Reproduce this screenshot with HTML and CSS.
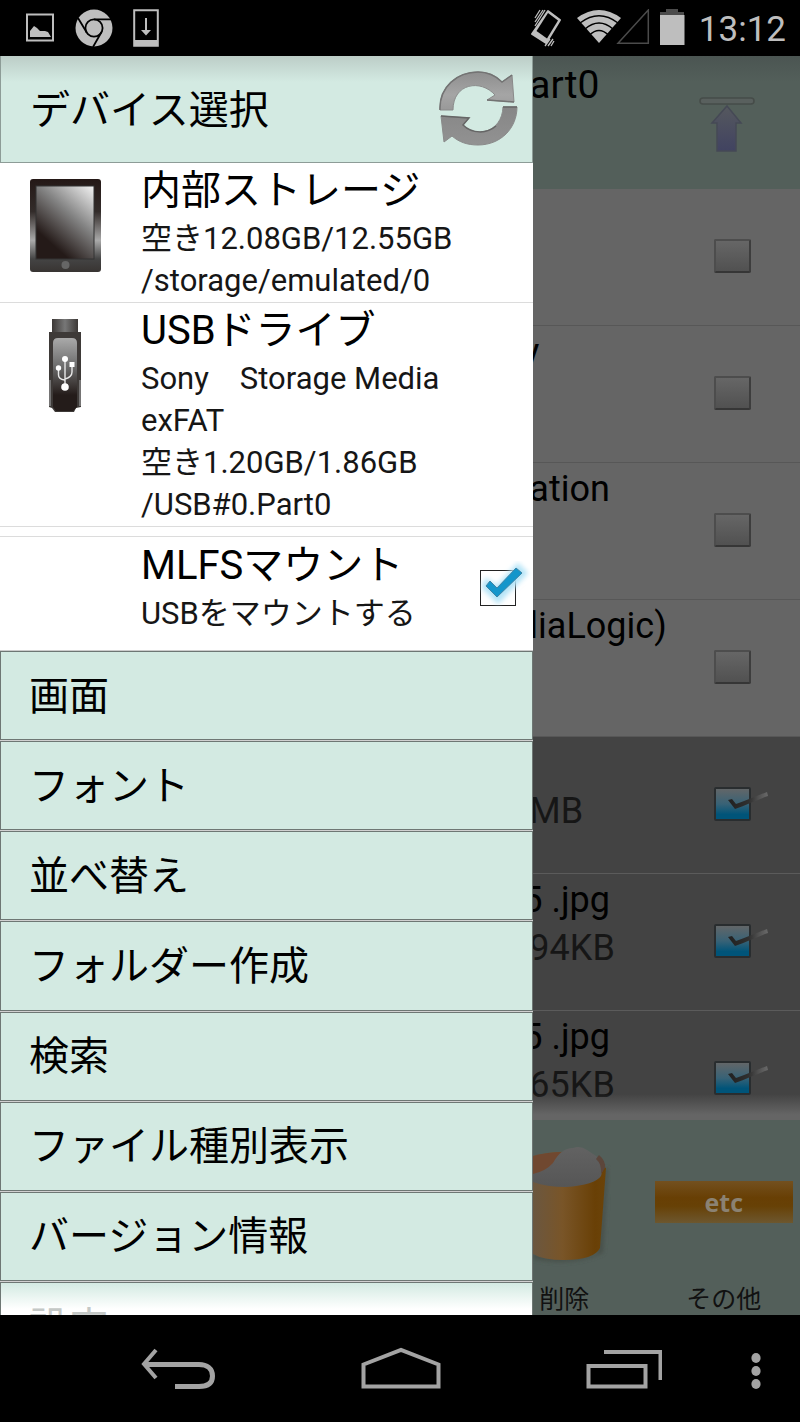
FILE: index.html
```html
<!DOCTYPE html>
<html lang="ja">
<head>
<meta charset="utf-8">
<meta name="viewport" content="width=device-width, initial-scale=1">
<title>デバイス選択</title>
<link rel="stylesheet" href="styles.css">
</head>
<body>
<header class="status">
  <div class="status-left">
    <svg width="30" height="38" viewBox="0 0 30 38"><path d="M2 5.500h26v26H2z" fill="none" stroke="#bebebe" stroke-width="2"/><path d="M5 28v-6l4-5 3 2 3 3h5l3 1 3 5z" fill="#bebebe"/></svg>
    <svg width="38" height="38" viewBox="0 0 38 38"><circle cx="19" cy="19" r="18.500" fill="#bebebe"/><g fill="none" stroke="#000" stroke-width="1.800"><circle cx="19" cy="19" r="8.600"/><path d="M19 10.400h17M11.600 23.300L3 9M26.400 23.300L18 38"/></g></svg>
    <svg width="26" height="38" viewBox="0 0 26 38"><path d="M1.200 1.200h23.600v35.600H1.200z" fill="#000" stroke="#bebebe" stroke-width="2"/><path d="M1 31h24v6H1zM12 9h2v12h4l-5 5.500-5-5.500h4z" fill="#bebebe"/></svg>
  </div>
  <div class="status-right">
    <svg width="32" height="38" viewBox="0 0 32 38"><path d="M18 2L30 11 16 34 2 25z" fill="#bebebe" stroke="#bebebe" stroke-width="2" stroke-linejoin="round"/><path d="M18 4L28 11.500 17 29.500 6.500 22z" fill="#000"/><path d="M5 9L10 1M5 13L13 1M5 17L15 1M15 37L20 30M18 37L23 30M21 37L24 32" stroke="#bebebe" stroke-width="1.300"/></svg>
    <svg class="wifi" width="76" height="38" viewBox="0 0 76 38"><path d="M0 9Q22 -7 44 9L22 34z" fill="#bebebe"/><g fill="none" stroke="#000" stroke-width="1.500"><path d="M3 14Q22-.5 41 14M8 20Q22 8 36 20M12.500 26Q22 17 31.500 26"/></g><path d="M41 34.300L71.300 1v33.300z" fill="none" stroke="#4b4b4b" stroke-width="1.500"/></svg>
    <svg width="25" height="38" viewBox="0 0 25 38"><path d="M6 0h12v3h6v4H0V3h6z" fill="#4b4b4b"/><path d="M0 6h24.500v30H0z" fill="#bebebe"/></svg>
    <time class="clock">13:12</time>
  </div>
</header>

<main class="screen">
  <aside class="drawer">
    <div class="drawer-head">
      <h1 class="title">デバイス選択</h1>
      <button class="refresh" aria-label="更新">
        <svg width="84" height="80" viewBox="0 0 84 80">
          <defs><linearGradient id="arrow" x1="0" y1="0" x2="0" y2="1"><stop offset="0" stop-color="#8e8e8e"/><stop offset=".6" stop-color="#a5a5a5"/><stop offset="1" stop-color="#999"/></linearGradient>
          <linearGradient id="arrow2" x1="0" y1="0" x2="0" y2="1"><stop offset="0" stop-color="#868686"/><stop offset="1" stop-color="#929292"/></linearGradient></defs>
          <path d="M2 41C1 18 19 3 40 3c11 0 18 4 24 10l10-7 2 27-27-2 8-5C43 10 15 14 15 41z" fill="url(#arrow)" stroke="#8a8a8a" stroke-width="1"/>
          <path d="M2 41C1 18 19 3 40 3c11 0 18 4 24 10l10-7M49 31l27 2" fill="none" stroke="#737373" stroke-width="1.500"/>
          <path d="M79 38c0 21-16 38-39 38-11 0-19-3-26-9l-8 6-3-26 28 2-6 7c12 13 39 8 40-18z" fill="url(#arrow2)" stroke="#8a8a8a" stroke-width="1"/>
          <path d="M65 38h14M3 47l28 2-6 7c9 9 24 9 33 1" fill="none" stroke="#666" stroke-width="1.500"/>
        </svg>
      </button>
    </div>

    <a class="device" href="#internal">
      <svg class="device-icon" width="74" height="96" viewBox="0 0 74 96">
        <defs><linearGradient id="case" x1="0" y1="0" x2="0" y2="1"><stop offset="0" stop-color="#241816"/><stop offset=".35" stop-color="#332c2a"/><stop offset=".66" stop-color="#aaa"/><stop offset=".86" stop-color="#444"/><stop offset="1" stop-color="#383432"/></linearGradient><linearGradient id="glass" x1=".95" y1="0" x2=".35" y2=".85"><stop offset="0" stop-color="#eee"/><stop offset=".5" stop-color="#828282"/><stop offset="1" stop-color="#241a18"/></linearGradient></defs>
        <rect x="1" y="1" width="71" height="93" rx="3" fill="url(#case)"/><rect x="7" y="8" width="58" height="73" fill="url(#glass)" stroke="#333" stroke-width="1"/><circle cx="36.500" cy="87" r="4" fill="#666"/>
      </svg>
      <span class="device-text"><strong class="name">内部ストレージ</strong><span class="line">空き12.08GB/12.55GB</span><span class="line">/storage/emulated/0</span></span>
    </a>
    <a class="device" href="#usb">
      <svg class="device-icon" width="74" height="96" viewBox="0 0 74 96">
        <defs><linearGradient id="stick" x1="0" y1="0" x2="0" y2="1"><stop offset="0" stop-color="#aaa"/><stop offset=".5" stop-color="#6c6c6c"/><stop offset="1" stop-color="#241c1a"/></linearGradient><linearGradient id="cap"><stop offset="0" stop-color="#3c3836"/><stop offset=".5" stop-color="#777"/><stop offset="1" stop-color="#3c3836"/></linearGradient></defs>
        <path d="M23 1h26v15H23z" fill="url(#cap)"/><path d="M20 14h32v75l-5 1-2 4H26l-3-4-3-1z" fill="#3e3a38"/><path d="M24 25q0-5 5-5h14q5 0 5 5v52H24z" fill="url(#stick)"/><path d="M24 77h24v12l-4 4H27l-3-4z" fill="#241c1a"/><path d="M21 62v26M51 62v26" stroke="#888" stroke-width="1.500"/>
        <g stroke="#e8e8e8" fill="none" stroke-width="1.400"><path d="M36 42v27M29.500 50v7q0 4 6 5M43 47v7q0 5-7 7"/></g><g fill="#fff"><circle cx="36" cy="41" r="3"/><circle cx="36" cy="69" r="3.800"/><circle cx="29.500" cy="50" r="2.700"/><path d="M40.500 44h5v5h-5z"/></g>
      </svg>
      <span class="device-text"><strong class="name">USBドライブ</strong><span class="line">Sony　Storage Media</span><span class="line">exFAT</span><span class="line">空き1.20GB/1.86GB</span><span class="line">/USB#0.Part0</span></span>
    </a>
    <label class="device mount" for="mount">
      <span class="device-text"><strong class="name">MLFSマウント</strong><span class="line">USBをマウントする</span></span>
      <span class="check mount-check"><input class="mount-input" type="checkbox" id="mount" checked>
        <svg class="mark" width="54" height="48" viewBox="0 0 54 48"><defs><filter id="glow" x="-30%" y="-30%" width="160%" height="160%"><feGaussianBlur stdDeviation="2.500"/></filter></defs><path d="M7 21l10 7L38 6l6 6-26 27L5 26z" fill="#b5e4f7" stroke="#b5e4f7" stroke-width="6" filter="url(#glow)"/><path d="M10 20l7 7L36 7l6 5-25 24L6 25z" fill="#1496cb" stroke="#3d83a5" stroke-width="1"/></svg>
      </span>
    </label>

    <nav class="menu">
      <button class="item">画面</button>
      <button class="item">フォント</button>
      <button class="item">並べ替え</button>
      <button class="item">フォルダー作成</button>
      <button class="item">検索</button>
      <button class="item">ファイル種別表示</button>
      <button class="item">バージョン情報</button>
      <button class="item last">設定</button>
    </nav>
  </aside>

  <section class="files">
    <div class="path">
      <span class="file-name folder">art0</span>
      <button class="up" aria-label="上へ"><svg width="58" height="58" viewBox="0 0 58 58"><defs><linearGradient id="up" x1="0" y1="0" x2="0" y2="1"><stop offset="0" stop-color="#55585e"/><stop offset="1" stop-color="#414361"/></linearGradient></defs><rect x="2" y="2" width="54" height="6" rx="3" fill="#59605e" stroke="#464c49" stroke-width="1.500"/><path d="M29 10l14 17h-5v28H19V27h-5z" fill="url(#up)" stroke="#454955" stroke-width="1.500"/></svg></button>
    </div>
    <div class="list">
      <div class="row"><span class="file-text"></span><span class="check"><input class="box" type="checkbox" aria-label="フォルダー1"></span></div>
      <div class="row"><span class="file-text"><span class="file-name tail">y</span></span><span class="check"><input class="box" type="checkbox" aria-label="フォルダー2"></span></div>
      <div class="row"><span class="file-text"><span class="file-name">ation</span></span><span class="check"><input class="box" type="checkbox" aria-label="フォルダー3"></span></div>
      <div class="row"><span class="file-text"><span class="file-name">liaLogic)</span></span><span class="check"><input class="box" type="checkbox" aria-label="フォルダー4"></span></div>
      <div class="row picked"><span class="file-text"><span class="file-name">&nbsp;</span><span class="size">MB</span></span><span class="check"><input class="box" type="checkbox" aria-label="ファイル1" checked><svg class="tick" width="44" height="24" viewBox="0 0 44 24"><use href="#pen"/></svg></span></div>
      <div class="row picked"><span class="file-text"><span class="file-name tail">5 .jpg</span><span class="size">94KB</span></span><span class="check"><input class="box" type="checkbox" aria-label="ファイル2" checked><svg class="tick" width="44" height="24" viewBox="0 0 44 24"><use href="#pen"/></svg></span></div>
      <div class="row picked"><span class="file-text"><span class="file-name tail">5 .jpg</span><span class="size">65KB</span></span><span class="check"><input class="box" type="checkbox" aria-label="ファイル3" checked><svg class="tick" width="44" height="24" viewBox="0 0 44 24"><defs><linearGradient id="ink" gradientUnits="userSpaceOnUse" x1="4" y1="0" x2="42" y2="0"><stop offset="0" stop-color="#222"/><stop offset=".5" stop-color="#303030"/><stop offset=".75" stop-color="#505050"/><stop offset="1" stop-color="#6a6a6a"/></linearGradient><path id="pen" d="M2 9l4-1 4 5C20 10 30 5 41 1l1 4C30 9 21 14 9 18z" fill="url(#ink)"/></defs><use href="#pen"/></svg></span></div>
    </div>
    <div class="tools">
      <button class="tool">
        <svg class="bucket" width="78" height="130" viewBox="0 0 78 130"><defs><filter id="soft"><feGaussianBlur stdDeviation="2"/></filter><linearGradient id="pail"><stop offset="0" stop-color="#6b5740"/><stop offset=".4" stop-color="#795528"/><stop offset=".85" stop-color="#694006"/><stop offset="1" stop-color="#6b4309"/></linearGradient><linearGradient id="paper" x1="0" y1="0" x2="0" y2="1"><stop offset="0" stop-color="#626262"/><stop offset="1" stop-color="#565656"/></linearGradient></defs><path d="M0 115q35 9 64 0l8-85 3 1-5 84q-32 14-70 6z" fill="#465049" filter="url(#soft)"/><path d="M0 18q20-5 38-4l35 16-6 80q-6 12-36 12-21 0-31-6z" fill="url(#pail)"/><path d="M0 18q15-4 31-4l-5 15-26 9z" fill="#704830"/><path d="M0 36q13-3 20-11 8-15 20-15 7-3 14 2l12 8q6 8 2 18-6 9-35 11-20 0-33-5z" fill="url(#paper)"/><path d="M66 17q7 6 6 13l-4 6q1-10-5-15z" fill="#5c463b"/></svg>
        <span class="tool-label">削除</span>
      </button>
      <button class="tool">
        <span class="etc">etc</span>
        <span class="tool-label">その他</span>
      </button>
    </div>
  </section>
</main>

<footer class="nav">
  <button class="nav-btn" aria-label="戻る"><svg width="76" height="50" viewBox="0 0 76 50"><path d="M16 6L4 20l12 14" fill="none" stroke="#a3a3a3" stroke-width="4"/><path d="M5 20.500h54c8 0 13.500 4 13.500 11.500S67 42.500 59 42.500H35" fill="none" stroke="#a3a3a3" stroke-width="5"/></svg></button>
  <button class="nav-btn" aria-label="ホーム"><svg width="80" height="50" viewBox="0 0 80 50"><path d="M2.500 42.500v-22L40 6l37.500 14.500v22z" fill="none" stroke="#a3a3a3" stroke-width="4"/></svg></button>
  <button class="nav-btn" aria-label="最近使ったアプリ"><svg width="76" height="50" viewBox="0 0 76 50"><path d="M2.500 22h57v20.500h-57zM18 8h56.500v28" fill="none" stroke="#a3a3a3" stroke-width="4"/></svg></button>
  <button class="more" aria-label="メニュー"><svg width="12" height="40" viewBox="0 0 12 40"><g fill="#a3a3a3"><ellipse cx="6" cy="7" rx="4.600" ry="5"/><ellipse cx="6" cy="20" rx="4.600" ry="5"/><ellipse cx="6" cy="33" rx="4.600" ry="5"/></g></svg></button>
</footer>
</body>
</html>
```
FILE: styles.css
```css
* { box-sizing: border-box; }
body {
  margin: 0;
  min-height: 100vh;
  display: flex;
  flex-direction: column;
  background: #000;
  color: #000;
  font-family: Roboto, "Noto Sans CJK JP", sans-serif;
}
button {
  border: 0;
  padding: 0;
  background: none;
  color: inherit;
  font: inherit;
}
a { color: inherit; text-decoration: none; }
svg { display: block; flex: none; }

.status {
  display: flex;
  justify-content: space-between;
  align-items: center;
  height: 56px;
  padding: 0 14px 0 25px;
}
.status-left { display: flex; gap: 20px; }
.status-right { display: flex; align-items: center; }
.wifi { margin: 0 7px 0 15px; }
.clock {
  margin: 4px 0 0 14px;
  color: #bebebe;
  font-size: 35px;
  line-height: 40px;
}

.screen {
  flex: 1;
  display: grid;
  grid-template-columns: 2fr 1fr;
}
.drawer {
  display: flex;
  flex-direction: column;
  min-width: 0;
  background: #fff;
}
.drawer-head {
  display: flex;
  justify-content: space-between;
  align-items: center;
  height: 107px;
  padding: 0 10px 0 29px;
  border: 1px solid #8d9c97;
  border-width: 0 1px 1px;
  background: linear-gradient(#bccdc7, #d3eae2 26px);
}
.title { margin: 0; padding-top: 4px; font-size: 40px; line-height: 54px; font-weight: 400; }
.device {
  display: flex;
  align-items: flex-start;
  padding: 1px 0 0 29px;
  border-bottom: 1px solid #dcdcdc;
}
.device-icon { margin: 14px 38px 0 0; }
.device-text { display: flex; flex: 1; flex-direction: column; }
.name { font-size: 40px; line-height: 54px; font-weight: 400; }
.line { font-size: 31px; line-height: 42px; color: #161616; }
.mount {
  margin-top: 9px;
  padding: 2px 10px 15px 141px;
  border-top: 1px solid #dcdcdc;
  border-bottom: 0;
}
.check { position: relative; flex: none; display: block; }
.mount-check { width: 43px; margin-top: 31px; }
.mount-input {
  display: block;
  appearance: none;
  width: 36px;
  height: 36px;
  margin: 0;
  border: 1px solid #222;
  background: #fff;
}
.mark { position: absolute; left: 0; top: -9px; }

.menu {
  flex: 1;
  display: grid;
  grid-template-rows: repeat(7, 1fr) 33px;
  gap: 1px;
  border-top: 1px solid #ccc;
  background: #d0d0d0;
}
.item {
  min-height: 88px;
  padding: 2px 28px 0;
  overflow: hidden;
  border: 1px solid #6e7774;
  background: #d3eae2;
  font-size: 40px;
  line-height: 54px;
  text-align: left;
}
.last {
  display: flex;
  min-height: 0;
  padding-top: 18px;
  border-bottom: 0;
  background: linear-gradient(#d3eae2, #fff 26px);
  color: #c4c8c6;
}

.files { display: flex; flex-direction: column; min-width: 0; overflow: hidden; background: #656565; }
.path {
  display: flex;
  justify-content: space-between;
  height: 133px;
  padding-right: 44px;
  background: linear-gradient(#4b5552, #535f5a 26px);
}
.up { align-self: flex-start; margin-top: 40px; }
.file-name {
  display: block;
  margin-left: -4px;
  font-size: 36px;
  line-height: 52px;
  white-space: pre;
}
.folder { font-size: 39px; line-height: 58px; }
.tail { margin-left: -11px; }
.size { display: block; margin-left: -4px; color: #161616; font-size: 36px; line-height: 44px; }
.list { position: relative; flex: 1 1 0; overflow: hidden; }
.list::after {
  content: "";
  position: absolute;
  inset: auto 0 0;
  height: 26px;
  background: linear-gradient(#65656500, #656565 80%);
}
.row {
  display: flex;
  justify-content: space-between;
  height: 137px;
  padding-right: 49px;
  border-bottom: 1px solid #575757;
}
.picked { background: #434343; border-color: #5b5b5b; }
.row .check { margin-top: 50px; }
.box {
  display: block;
  appearance: none;
  width: 37px;
  height: 34px;
  margin: 0;
  border: 2px solid #4d4d4d;
  border-right-color: #3d3d3d;
  border-bottom-color: #363636;
  border-radius: 2px;
  background: linear-gradient(#666, #515151);
}
.box:checked { border-color: #292d2f; background: linear-gradient(#626668, #386276 50%, #005479 85%); }
.tick { position: absolute; left: 12px; top: 4px; }

.tools {
  display: grid;
  grid-template-columns: 3fr 4fr;
  height: 195px;
  background: #535f5a;
}
.tool {
  display: flex;
  flex-direction: column;
  justify-content: flex-end;
  align-items: center;
  min-width: 0;
}
.tool:first-child { align-items: flex-start; }
.tool:first-child .tool-label { margin-left: 6px; }
.bucket { margin-bottom: 17px; }
.tool-label { font-size: 25px; line-height: 30px; color: #111; }
.etc {
  width: 138px;
  margin-bottom: 62px;
  background: linear-gradient(#73501f, #683f04 40%, #674106 60%, #6d572f);
  color: #8b8273;
  font: 700 25px/42px "Open Sans", sans-serif;
  text-align: center;
}
.nav {
  display: grid;
  grid-template-columns: repeat(3, 1fr) 65px;
  align-items: center;
  height: 107px;
  padding-left: 66px;
}
.nav-btn, .more { display: flex; justify-content: center; }
.more { justify-content: flex-start; padding: 4px 0 0 15px; }
```
